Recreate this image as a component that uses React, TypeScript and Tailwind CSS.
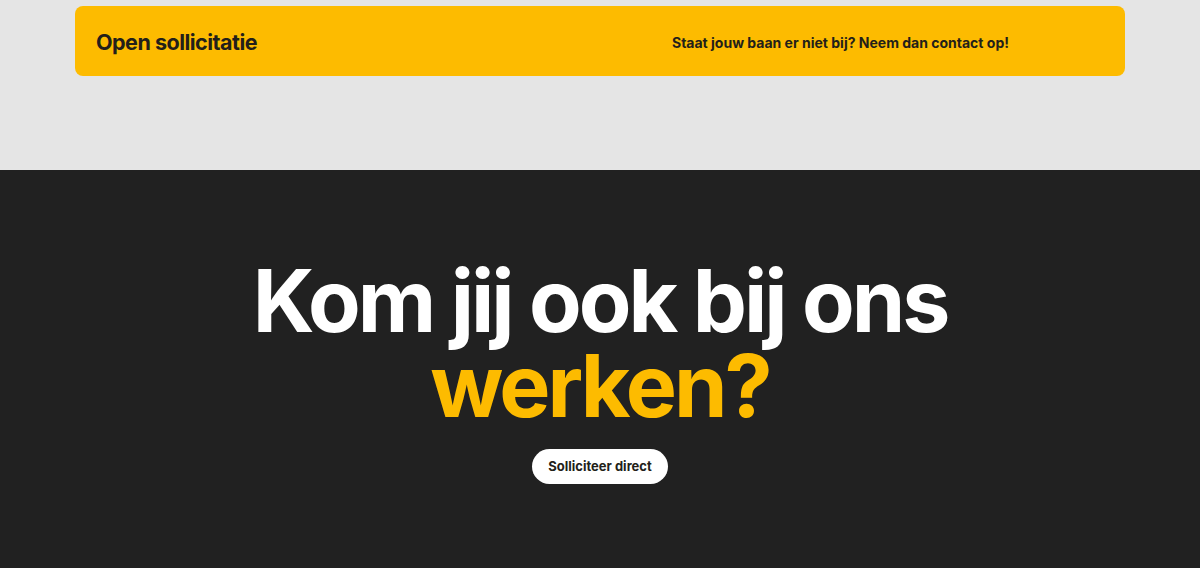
export default function App() {
  return (
    <div className="w-[1200px] h-[568px] overflow-hidden" style={{ fontFamily: "Inter, 'Noto Sans', sans-serif" }}>
      <div className="bg-[#e5e5e5] h-[170px] pt-[6px]">
        <div className="mx-[75px] h-[70px] rounded-[8px] bg-[#fdbb00] flex items-center pl-[21px] pt-[2px] text-[#231f1a]">
          <div className="w-[576px] text-[21.5px] font-bold tracking-[-0.5px]">Open sollicitatie</div>
          <div className="text-[14px] font-bold">Staat jouw baan er niet bij? Neem dan contact op!</div>
        </div>
      </div>
      <div className="bg-[#212121] h-[398px] flex flex-col items-center pt-[89px]">
        <h1 className="text-[86px] font-bold leading-[85px] tracking-[-3px] text-center">
          <div className="text-white">Kom jij ook bij ons</div>
          <div className="text-[#fdbb00]">werken?</div>
        </h1>
        <button className="mt-[20px] h-[35px] px-[16px] rounded-full bg-white text-[#231f1a] text-[13px] font-bold">
          Solliciteer direct
        </button>
      </div>
    </div>
  );
}
